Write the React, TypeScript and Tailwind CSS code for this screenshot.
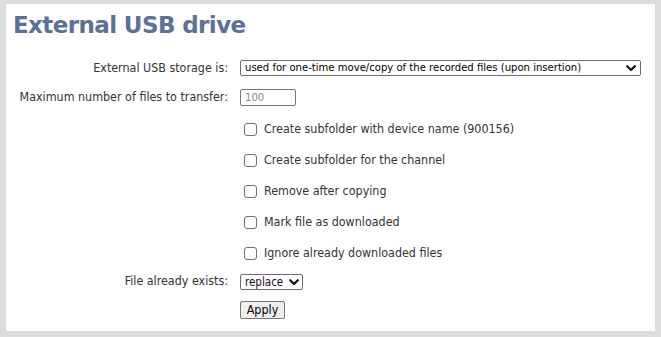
const CHECKS = [
  'Create subfolder with device name (900156)',
  'Create subfolder for the channel',
  'Remove after copying',
  'Mark file as downloaded',
  'Ignore already downloaded files',
];

const body = "font-['DejaVu_Sans_Condensed','DejaVu_Sans',sans-serif]";

function Label({ children }: { children: React.ReactNode }) {
  return <div className="w-[222px] shrink-0 text-right text-[12.4px] text-[#333]">{children}</div>;
}

function Chevron({ className }: { className: string }) {
  return (
    <svg viewBox="0 0 10 7" className={`absolute pointer-events-none w-[10px] h-[7px] ${className}`}>
      <polyline points="1.2,1.2 5,5 8.8,1.2" fill="none" stroke="#111" strokeWidth="2.2" strokeLinecap="round" strokeLinejoin="round" />
    </svg>
  );
}

export default function App() {
  return (
    <div className={`w-[661px] h-[337px] bg-white border-[#dcdcdc] border-t-4 border-l-[6px] border-r-[6px] border-b-[6px] ${body}`}>
      <div className="h-[52px] pl-[7px] pt-[6px]">
        <h1 className="font-['DejaVu_Sans',sans-serif] font-bold text-[23px] tracking-[-0.6px] leading-[30px] text-[#5b7298]">
          External USB drive
        </h1>
      </div>

      <div className="flex items-center h-[24px]">
        <Label>External USB storage is:</Label>
        <div className="relative ml-[12px]">
          <select className="block appearance-none w-[401px] h-[16px] border border-[#6b6b6b] rounded-[2px] pl-[4px] text-[11.2px] leading-[14px] text-black bg-white">
            <option>used for one-time move/copy of the recorded files (upon insertion)</option>
          </select>
          <Chevron className="right-[5px] top-[5px]" />
        </div>
      </div>

      <div className="flex items-center h-[34px]">
        <Label>Maximum number of files to transfer:</Label>
        <input
          className="ml-[12px] w-[56px] h-[17px] border border-[#767676] rounded-[2px] px-[4px] text-[11.2px] text-[#8a8a8a]"
          defaultValue="100"
        />
      </div>

      {CHECKS.map((c) => (
        <div key={c} className="flex items-center h-[31px]">
          <div className="w-[222px] shrink-0" />
          <label className="ml-[16px] flex items-center gap-[7px] text-[12.4px] text-[#333]">
            <span className="w-[13px] h-[13px] border border-[#6e6e6e] rounded-[3px] bg-white" />
            {c}
          </label>
        </div>
      ))}

      <div className="flex items-center h-[25px]">
        <Label>File already exists:</Label>
        <div className="relative ml-[12px]">
          <select className="block appearance-none w-[63px] h-[16px] border border-[#6b6b6b] rounded-[2px] pl-[4px] text-[11.5px] leading-[14px] text-[#1a0a2a] bg-white">
            <option>replace</option>
          </select>
          <Chevron className="right-[4px] top-[5px]" />
        </div>
      </div>

      <div className="flex h-[31px] pt-[7px]">
        <div className="w-[222px] shrink-0" />
        <button className="ml-[12px] w-[45px] h-[18px] border border-[#767676] rounded-[2px] bg-[#efefef] text-[12.4px] leading-[16px] text-black">
          Apply
        </button>
      </div>
    </div>
  );
}
